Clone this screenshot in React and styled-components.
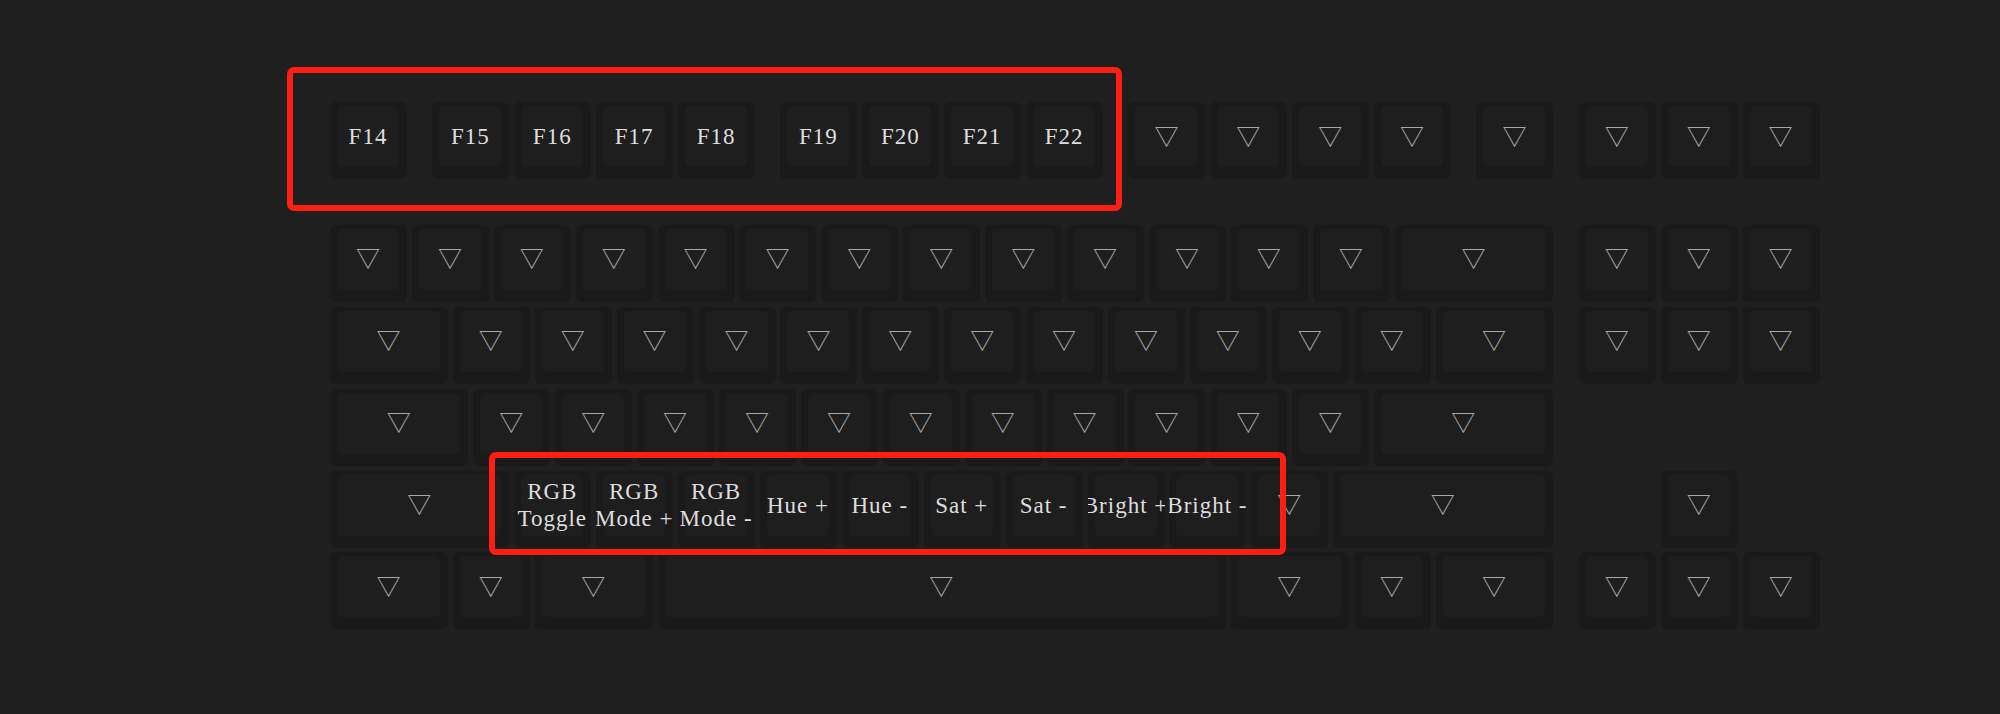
import React from 'react';
import styled, { createGlobalStyle } from 'styled-components';

const U = 81.9;
const GAP = 4.9;

const GlobalStyle = createGlobalStyle`
  html, body {
    margin: 0;
    background: #1f1f1f;
  }
`;

const Page = styled.div`
  width: 2000px;
  height: 714px;
  box-sizing: border-box;
  padding: 102px 0 0 330px;
  background: #1f1f1f;
  overflow: hidden;
`;

const Board = styled.div`
  position: relative;
  display: flex;
  flex-direction: column;
`;

const Row = styled.div`
  display: flex;
  height: ${U - GAP}px;
  margin-bottom: ${p => (p.$spaced ? U * 0.5 + GAP : GAP)}px;
`;

const KeyBox = styled.div`
  flex: none;
  display: flex;
  box-sizing: border-box;
  width: ${p => p.$w * U - GAP}px;
  margin-left: ${p => p.$skip * U}px;
  margin-right: ${GAP}px;
  padding: 4px 8px 12px 7px;
  border-radius: 6px;
  background: #1a1a1a;
  overflow: hidden;
`;

const Cap = styled.div`
  flex: 1;
  min-width: 0;
  display: flex;
  align-items: center;
  justify-content: center;
  border-radius: 5px;
  background: #1e1e1e;
`;

const Label = styled.span`
  flex: none;
  font-family: 'Liberation Serif', serif;
  font-size: 23px;
  line-height: 27px;
  letter-spacing: 1px;
  color: #dedede;
  white-space: pre;
  text-align: center;
`;

const Mark = styled.span`
  flex: none;
  font-family: 'Noto Sans CJK SC', sans-serif;
  font-size: 24px;
  line-height: 1;
  color: #a8a8a8;
  transform: translateY(-2px);
`;

const Highlight = styled.div`
  position: absolute;
  left: ${p => p.$x}px;
  top: ${p => p.$y}px;
  width: ${p => p.$w}px;
  height: ${p => p.$h}px;
  box-sizing: border-box;
  border: 6px solid #ff1e12;
  border-radius: 7px;
  pointer-events: none;
`;

const ones = n => Array.from({ length: n }, () => [1]);

const rows = [
  [
    [1, 0, 'F14'], [1, 0.25, 'F15'], [1, 0, 'F16'], [1, 0, 'F17'], [1, 0, 'F18'],
    [1, 0.25, 'F19'], [1, 0, 'F20'], [1, 0, 'F21'], [1, 0, 'F22'],
    [1, 0.25], [1], [1], [1],
    [1, 0.25],
    [1, 0.25], [1], [1],
  ],
  [...ones(13), [2], [1, 0.25], [1], [1]],
  [[1.5], ...ones(12), [1.5], [1, 0.25], [1], [1]],
  [[1.75], ...ones(11), [2.25]],
  [
    [2.25],
    [1, 0, 'RGB\nToggle'], [1, 0, 'RGB\nMode +'], [1, 0, 'RGB\nMode -'],
    [1, 0, 'Hue +'], [1, 0, 'Hue -'], [1, 0, 'Sat +'], [1, 0, 'Sat -'],
    [1, 0, 'Bright +'], [1, 0, 'Bright -'], [1],
    [2.75], [1, 1.25],
  ],
  [[1.5], [1], [1.5], [7], [1.5], [1], [1.5], [1, 0.25], [1], [1]],
];

const Key = ({ w, skip = 0, label }) => (
  <KeyBox $w={w} $skip={skip}>
    <Cap>{label ? <Label>{label}</Label> : <Mark>▽</Mark>}</Cap>
  </KeyBox>
);

const App = () => (
  <Page>
    <GlobalStyle />
    <Board>
      {rows.map((row, i) => (
        <Row key={i} $spaced={i === 0}>
          {row.map(([w, skip, label], j) => (
            <Key key={j} w={w} skip={skip} label={label} />
          ))}
        </Row>
      ))}
      <Highlight $x={-43} $y={-35} $w={835} $h={144} />
      <Highlight $x={159} $y={350} $w={797} $h={103} />
    </Board>
  </Page>
);

export default App;
